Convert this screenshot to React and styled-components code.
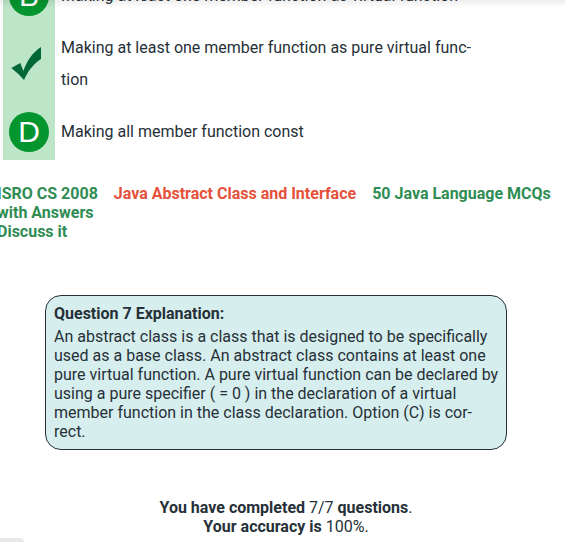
import React from "react";
import styled, { createGlobalStyle } from "styled-components";

const Global = createGlobalStyle`
  * { box-sizing: border-box; }
  body { margin: 0; overflow: hidden; background: #fff; color: #263038; font: 16px/32px Roboto, sans-serif; }
`;
const Page = styled.main`
  display: flex;
  flex-direction: column;
`;
const HeaderShadow = styled.div`
  position: fixed;
  inset: 0 0 auto 0;
  height: 8px;
  background: linear-gradient(rgba(0, 0, 0, 0.07), rgba(0, 0, 0, 0));
  pointer-events: none;
`;
const Options = styled.ul`
  list-style: none;
  margin: -32px 0 0 3px;
  padding: 0;
`;
const Option = styled.li`
  display: flex;
`;
const Marker = styled.div`
  width: 52px;
  flex: none;
  display: flex;
  align-items: center;
  justify-content: center;
  background: #bde5c8;
`;
const Letter = styled.span`
  width: 40px;
  height: 40px;
  border-radius: 50%;
  background: #04952f;
  color: #fff;
  font: 30px/40px "Liberation Sans", sans-serif;
  text-align: center;
`;
const Check = styled.svg`
  width: 34px;
  height: 36px;
  margin-right: 4px;
`;
const Answer = styled.p`
  margin: 0;
  padding: ${(p) => (p.$tall ? "8px" : "12px")} 6px;
`;
const Links = styled.nav`
  display: flex;
  gap: 16px;
  margin: 24px 0 0 -3px;
  line-height: 19px;
  font-weight: 700;
`;
const TagLink = styled.a`
  color: ${(p) => (p.$active ? "#e5513b" : "#2f8d53")};
  text-decoration: none;
  white-space: nowrap;
`;
const Explanation = styled.section`
  margin: 54px 58px 0 45px;
  padding: 8px;
  border: 1px solid #263038;
  border-radius: 16px;
  background: #d7eeee;
  line-height: 19px;
`;
const Title = styled.h2`
  margin: 0 0 4px;
  font-size: 16px;
  line-height: 19px;
`;
const Body = styled.p`
  margin: 0;
  white-space: nowrap;
`;
const Result = styled.p`
  margin: 48px 0 0 7px;
  text-align: center;
  line-height: 19px;
`;
const CornerTab = styled.div`
  position: fixed;
  left: 0;
  bottom: 0;
  width: 24px;
  height: 4px;
  border-radius: 0 4px 0 0;
  background: #e9e9e9;
`;

export default function App() {
  return (
    <Page>
      <Global />
      <Options>
        <Option><Marker><Letter>B</Letter></Marker><Answer>Making at least one member function as virtual function</Answer></Option>
        <Option>
          <Marker>
            <Check viewBox="0 0 34 36" role="img" aria-label="Correct answer"><path d="M1.3 22L10.2 17Q11.5 20 13.4 25C17 15 22 7 31 1V13C23 18.5 18 25 14 34Q8.5 27.5 1.3 22Z" fill="#006838" /></Check>
          </Marker>
          <Answer $tall>Making at least one member function as pure virtual func-<br />tion</Answer>
        </Option>
        <Option><Marker><Letter>D</Letter></Marker><Answer>Making all member function const</Answer></Option>
      </Options>
      <Links>
        <TagLink href="#isro">ISRO CS 2008<br />with Answers<br />Discuss it</TagLink>
        <TagLink href="#abstract" $active>Java Abstract Class and Interface</TagLink>
        <TagLink href="#java">50 Java Language MCQs</TagLink>
      </Links>
      <Explanation>
        <Title>Question 7 Explanation:</Title>
        <Body>An abstract class is a class that is designed to be specifically<br />used as a base class. An abstract class contains at least one<br />pure virtual function. A pure virtual function can be declared by<br />using a pure specifier ( = 0 ) in the declaration of a virtual<br />member function in the class declaration. Option (C) is cor-<br />rect.</Body>
      </Explanation>
      <Result><b>You have completed</b> 7/7 <b>questions</b>.<br /><b>Your accuracy is</b> 100%.</Result>
      <HeaderShadow />
      <CornerTab />
    </Page>
  );
}
